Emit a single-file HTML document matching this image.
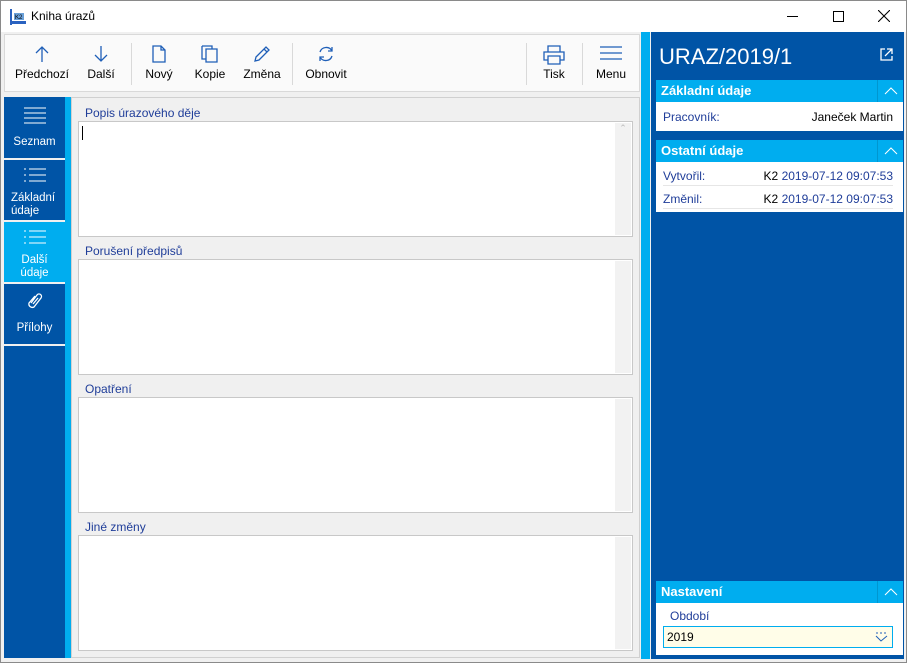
<!DOCTYPE html>
<html><head><meta charset="utf-8"><style>
*{box-sizing:border-box;margin:0;padding:0}
body{width:907px;height:663px;overflow:hidden;font-family:"Liberation Sans",sans-serif;font-size:12px;background:#f0f0f0;position:relative}
.abs{position:absolute}
.win{left:0;top:0;width:907px;height:663px;border:1px solid #8a8a8a}
.title{left:1px;top:1px;width:905px;height:31px;background:#fff}
.tb{left:4px;top:34px;width:636px;height:58px;background:#fafafa;border:1px solid #d9d9d9}
.btn{position:absolute;top:0;height:56px;text-align:center;font-size:12px;color:#000}
.btn svg{position:absolute;left:50%;top:10px;transform:translateX(-50%)}
.btn span{position:absolute;left:0;right:0;top:32px}
.sep{position:absolute;top:8px;width:1px;height:42px;background:#d9d9d9}
.nav{left:4px;top:97px;width:61px;height:561px;background:#0054a6}
.nitem{position:absolute;left:0;width:61px;color:#fff;text-align:center;font-size:11.5px;line-height:13px;border-bottom:2px solid #f0f0f0}
.nitem svg{display:block;margin-left:auto;margin-right:auto}
.content{left:71px;top:97px;width:569px;height:561px;background:#f0f0f0;border:1px solid #d0d0d0}
.lbl{position:absolute;left:85px;color:#1f3d99;font-size:12px}
.ta{position:absolute;left:78px;width:555px;height:116px;background:#fff;border:1px solid #c8c8c8}
.ta .sb{position:absolute;right:1px;top:1px;bottom:1px;width:16px;background:#f2f2f2;color:#bbb;font-size:9px;text-align:center}
.rp{left:651px;top:32px;width:253px;height:627px;background:#0054a6}
.hdr{position:absolute;left:656px;width:247px;height:22px;background:#00adef;color:#fff;font-weight:bold;font-size:13px;line-height:22px;padding-left:5px}
.hdr i{position:absolute;right:0;top:0;width:26px;height:22px;border-left:1px solid #0096d0}
.box{position:absolute;left:656px;width:247px;background:#fff}
.row{position:absolute;left:7px;right:10px;height:20px;line-height:20px;font-size:12px}
</style></head><body>
<div class="abs win"></div>
<div class="abs title">
 <svg class="abs" style="left:9px;top:8px" width="16" height="16"><rect x="0" y="0" width="2" height="16" fill="#2a62c0"/><rect x="2" y="12" width="14" height="3" fill="#2a62c0"/><rect x="4" y="4" width="10" height="7" fill="#6aa0d8"/><text x="5" y="10" font-size="6" fill="#000" font-family="Liberation Sans">K2</text></svg>
 <div class="abs" style="left:30px;top:8px;font-size:12px">Kniha úrazů</div>
 <div class="abs" style="left:786px;top:15px;width:11px;height:1px;background:#000"></div>
 <div class="abs" style="left:832px;top:10px;width:11px;height:11px;border:1px solid #000"></div>
 <svg class="abs" style="left:877px;top:9px" width="12" height="12"><path d="M0 0L12 12M12 0L0 12" stroke="#000" stroke-width="1.1"/></svg>
</div>
<div class="abs tb">
 <div class="btn" style="left:6px;width:62px"><svg width="14" height="18"><path d="M7 2V17M1 8L7 2L13 8" stroke="#1f5fb8" fill="none" stroke-width="1.3"/></svg><span>Předchozí</span></div>
 <div class="btn" style="left:74px;width:44px"><svg width="14" height="18"><path d="M7 1V16M1 10L7 16L13 10" stroke="#1f5fb8" fill="none" stroke-width="1.3"/></svg><span>Další</span></div>
 <div class="sep" style="left:126px"></div>
 <div class="btn" style="left:134px;width:40px"><svg width="14" height="18"><path d="M1 1H9L13 5V17H1Z M9 1V5H13" stroke="#1f5fb8" fill="none" stroke-width="1.3"/></svg><span>Nový</span></div>
 <div class="btn" style="left:184px;width:42px"><svg width="18" height="18"><path d="M1 1H11V4M1 1V14H5M5 4H16V17H5Z" stroke="#1f5fb8" fill="none" stroke-width="1.3"/></svg><span>Kopie</span></div>
 <div class="btn" style="left:234px;width:46px"><svg width="18" height="18"><path d="M2 16L3 12L13 2L16 5L6 15Z M11 4L14 7" stroke="#1f5fb8" fill="none" stroke-width="1.3"/></svg><span>Změna</span></div>
 <div class="sep" style="left:287px"></div>
 <div class="btn" style="left:294px;width:54px"><svg width="18" height="18"><path d="M3 7A6.5 6.5 0 0 1 15 6M15 2V6H11M15 11A6.5 6.5 0 0 1 3 12M3 16V12H7" stroke="#1f5fb8" fill="none" stroke-width="1.3"/></svg><span>Obnovit</span></div>
 <div class="sep" style="left:521px"></div>
 <div class="btn" style="left:530px;width:38px"><svg width="22" height="20"><path d="M5 7V1H17V7M5 15H1V7H21V15H17M5 11H17V19H5Z" stroke="#1f5fb8" fill="none" stroke-width="1.3"/></svg><span>Tisk</span></div>
 <div class="sep" style="left:577px"></div>
 <div class="btn" style="left:584px;width:44px"><svg width="22" height="16"><path d="M0 2H22M0 8H22M0 14H22" stroke="#1f5fb8" stroke-width="1.3"/></svg><span>Menu</span></div>
</div>
<div class="abs nav">
 <div class="nitem" style="top:0;height:63px"><svg style="margin-top:10px" width="22" height="17"><path d="M0 1H22M0 6H22M0 11H22M0 16H22" stroke="#fff"/></svg><div style="margin-top:12px">Seznam</div></div>
 <div class="nitem" style="top:63px;height:62px"><svg style="margin-top:7px" width="22" height="16"><path d="M0 2H2M5 2H22M0 8H2M5 8H22M0 14H2M5 14H22" stroke="#fff"/></svg><div style="margin-top:9px;text-align:left;padding-left:7px">Základní<br>údaje</div></div>
 <div class="nitem" style="top:125px;height:62px;background:#00adef"><svg style="margin-top:7px" width="22" height="16"><path d="M0 2H2M5 2H22M0 8H2M5 8H22M0 14H2M5 14H22" stroke="#fff"/></svg><div style="margin-top:9px">Další<br>údaje</div></div>
 <div class="nitem" style="top:187px;height:62px"><svg style="margin-top:8px" width="16" height="18"><path d="M4 11L10 3A2.5 2.5 0 0 1 14 6L7 15A3.5 3.5 0 0 1 2 11L8 4M6 12L11 6" stroke="#fff" fill="none" stroke-width="1.3"/></svg><div style="margin-top:12px">Přílohy</div></div>
</div>
<div class="abs" style="left:65px;top:97px;width:6px;height:561px;background:#00adef"></div>
<div class="abs content"></div>
<div class="lbl" style="top:106px">Popis úrazového děje</div>
<div class="ta" style="top:121px"><div class="abs" style="left:3px;top:4px;width:1px;height:14px;background:#000"></div><div class="sb">⌃</div></div>
<div class="lbl" style="top:244px">Porušení předpisů</div>
<div class="ta" style="top:259px"><div class="sb"></div></div>
<div class="lbl" style="top:382px">Opatření</div>
<div class="ta" style="top:397px"><div class="sb"></div></div>
<div class="lbl" style="top:520px">Jiné změny</div>
<div class="ta" style="top:535px"><div class="sb"></div></div>
<div class="abs" style="left:641px;top:32px;width:9px;height:627px;background:#00adef"></div>
<div class="abs rp"></div>
<div class="abs" style="left:659px;top:44px;color:#fff;font-size:22px">URAZ/2019/1</div>
<svg class="abs" style="left:880px;top:48px" width="13" height="13"><path d="M5 1H1V12H12V8M7 1H12V6M12 1L5 8" stroke="#fff" fill="none" stroke-width="1.3"/></svg>
<div class="hdr" style="top:80px">Základní údaje<i><svg style="margin:6px 0 0 6px" width="14" height="8"><path d="M1 7L7 1L13 7" stroke="#fff" fill="none"/></svg></i></div>
<div class="box" style="top:102px;height:29px"><div class="row" style="top:5px;color:#1f3d99">Pracovník:<span style="float:right;color:#000">Janeček Martin</span></div></div>
<div class="hdr" style="top:140px">Ostatní údaje<i><svg style="margin:6px 0 0 6px" width="14" height="8"><path d="M1 7L7 1L13 7" stroke="#fff" fill="none"/></svg></i></div>
<div class="box" style="top:162px;height:50px">
 <div class="row" style="top:4px;color:#1f3d99;border-bottom:1px solid #e6e6e6">Vytvořil:<span style="float:right"><b style="font-weight:normal;color:#000">K2</b> 2019-07-12 09:07:53</span></div>
 <div class="row" style="top:27px;color:#1f3d99;border-bottom:1px solid #e6e6e6">Změnil:<span style="float:right"><b style="font-weight:normal;color:#000">K2</b> 2019-07-12 09:07:53</span></div>
</div>
<div class="hdr" style="top:581px">Nastavení<i><svg style="margin:6px 0 0 6px" width="14" height="8"><path d="M1 7L7 1L13 7" stroke="#fff" fill="none"/></svg></i></div>
<div class="box" style="top:603px;height:52px">
 <div class="abs" style="left:14px;top:6px;color:#1f3d99">Období</div>
 <div class="abs" style="left:7px;top:23px;width:230px;height:22px;background:#fffde8;border:1px solid #00adef;padding:3px 0 0 3px">2019
  <svg class="abs" style="right:4px;top:5px" width="13" height="10"><path d="M1 1H3M5 1H7M9 1H11M1 4L6 9L12 4" stroke="#1f5fb8" fill="none"/></svg></div>
</div>
</body></html>
